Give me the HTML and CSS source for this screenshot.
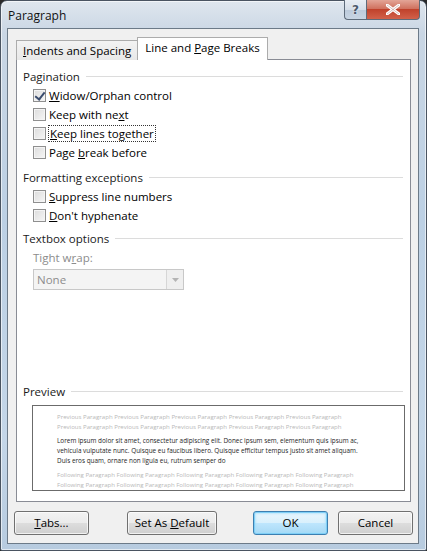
FILE: index.html
```html
<!DOCTYPE html>
<html lang="en">
<head>
  <meta charset="UTF-8">
  <title>Paragraph</title>
  <link rel="stylesheet" href="styles.css">
</head>
<body>
  <div class="window">
    <div class="titlebar">
      <span class="title">Paragraph</span>
      <div class="caption-buttons">
        <div class="cap-btn help">?</div>
        <div class="cap-btn close">
          <svg width="14" height="11" viewBox="0 0 14 11">
            <path d="M1 1 L13 10 M13 1 L1 10" stroke="#fff" stroke-width="3" stroke-linecap="square"/>
            <path d="M1 1 L13 10 M13 1 L1 10" stroke="#7a2a20" stroke-width="0.6" fill="none" opacity="0.5"/>
          </svg>
        </div>
      </div>
    </div>

    <div class="client">
      <div class="tabs">
        <div class="tab"><u>I</u>ndents and Spacing</div>
        <div class="tab active">Line and <u>P</u>age Breaks</div>
      </div>

      <div class="panel">
        <div class="group-title"><span>Pagination</span></div>
        <div class="check-list first-list">
          <label class="check"><span class="box checked"></span><span><u>W</u>idow/Orphan control</span></label>
          <label class="check"><span class="box"></span><span>Keep with ne<u>x</u>t</span></label>
          <label class="check"><span class="box"></span><span class="focus"><u>K</u>eep lines together</span></label>
          <label class="check"><span class="box"></span><span>Page <u>b</u>reak before</span></label>
        </div>

        <div class="group-title"><span>Formatting exceptions</span></div>
        <div class="check-list">
          <label class="check"><span class="box"></span><span><u>S</u>uppress line numbers</span></label>
          <label class="check"><span class="box"></span><span><u>D</u>on't hyphenate</span></label>
        </div>

        <div class="group-title"><span>Textbox options</span></div>
        <div class="field">
          <div class="field-label">Tight w<u>r</u>ap:</div>
          <div class="select">
            <span>None</span>
            <span class="select-arrow">
              <svg width="7" height="4" viewBox="0 0 7 4"><path d="M0 0 H7 L3.5 4 Z" fill="#b4b4b4"/></svg>
            </span>
          </div>
        </div>

        <div class="spacer"></div>

        <div class="group-title"><span>Preview</span></div>
        <div class="preview">
          <div class="pv-line pv-gray">Previous Paragraph Previous Paragraph Previous Paragraph Previous Paragraph Previous Paragraph</div>
          <div class="pv-line pv-gray">Previous Paragraph Previous Paragraph Previous Paragraph Previous Paragraph Previous Paragraph</div>
          <div class="pv-line pv-dark pv-first">Lorem ipsum dolor sit amet, consectetur adipiscing elit. Donec ipsum sem, elementum quis ipsum ac,</div>
          <div class="pv-line pv-dark">vehicula vulputate nunc. Quisque eu faucibus libero. Quisque efficitur tempus justo sit amet aliquam.</div>
          <div class="pv-line pv-dark">Duis eros quam, ornare non ligula eu, rutrum semper do</div>
          <div class="pv-line pv-gray pv-first">Following Paragraph Following Paragraph Following Paragraph Following Paragraph Following Paragraph</div>
          <div class="pv-line pv-gray">Following Paragraph Following Paragraph Following Paragraph Following Paragraph Following Paragraph</div>
        </div>
      </div>

      <div class="buttons">
        <button class="btn"><u>T</u>abs...</button>
        <button class="btn btn-wide">Set As <u>D</u>efault</button>
        <div class="buttons-right">
          <button class="btn btn-default">OK</button>
          <button class="btn">Cancel</button>
        </div>
      </div>
    </div>
  </div>
</body>
</html>
```

FILE: styles.css
```css
* {
  box-sizing: border-box;
}

body {
  margin: 0;
  width: 427px;
  height: 551px;
  overflow: hidden;
  background: #2a2a2a;
  font-family: 'Open Sans', 'Noto Sans', sans-serif;
  font-size: 11.5px;
  color: #000;
}

.window {
  width: 427px;
  height: 551px;
  display: flex;
  flex-direction: column;
  border: 1px solid #4a5461;
  border-radius: 7px 7px 2px 2px;
  background: linear-gradient(180deg, #dfe6ee 0%, #c9d6e4 6%, #bcd0e4 40%, #c4d6e8 80%, #b7cbdf 100%);
  box-shadow: inset 0 0 0 1px rgba(255, 255, 255, 0.6);
}

.titlebar {
  height: 27px;
  display: flex;
  justify-content: space-between;
  align-items: flex-start;
  padding-left: 7px;
}

.title {
  margin-top: 6px;
  font-size: 12px;
  color: #111;
}

.caption-buttons {
  display: flex;
  margin-right: 6px;
  margin-top: -1px;
}

.cap-btn {
  height: 20px;
  display: flex;
  align-items: center;
  justify-content: center;
  border: 1px solid #5e6b7a;
  border-top: none;
}

.help {
  width: 22px;
  border-radius: 0 0 0 4px;
  border-right: none;
  background: linear-gradient(180deg, #e8edf3 0%, #d5dee8 50%, #bccadb 51%, #c8d5e3 100%);
  color: #4c5a6b;
  font-family: 'DejaVu Sans', sans-serif;
  font-weight: bold;
  font-size: 12px;
  text-shadow: 0 0 2px #fff;
}

.close {
  width: 54px;
  border-radius: 0 0 4px 0;
  background: linear-gradient(180deg, #e3a597 0%, #d0725f 45%, #c0422c 50%, #d2614a 100%);
}

.client {
  flex: 1;
  margin: 0 7px 6px 6px;
  background: #f0f0f0;
  border: 1px solid #6c7a88;
  display: flex;
  flex-direction: column;
  padding: 0 7px 0 8px;
}

.tabs {
  display: flex;
  align-items: flex-end;
  height: 31px;
  margin-bottom: -1px;
  position: relative;
  z-index: 1;
}

.tab {
  height: 20px;
  padding: 1px 6px 0 6px;
  border: 1px solid #acacac;
  border-bottom: none;
  background: linear-gradient(180deg, #f3f3f3, #e8e8e8);
  font-size: 11.5px;
  line-height: 18px;
}

.tab.active {
  height: 23px;
  margin-left: -1px;
  padding: 1px 7px 0 7px;
  background: #fff;
  line-height: 18px;
}

.panel {
  height: 443px;
  background: #fff;
  border: 1px solid #898c95;
  display: flex;
  flex-direction: column;
  padding: 7px 7px 10px 6px;
}

.group-title {
  display: flex;
  align-items: center;
  gap: 6px;
  height: 18px;
  color: #1a1a1a;
}

.group-title::after {
  content: "";
  flex: 1;
  border-top: 1px solid #dcdcdc;
  margin-top: 1px;
}

.check-list {
  display: flex;
  flex-direction: column;
  padding: 1px 0 4px 10px;
}

.first-list {
  padding-bottom: 6px;
}

.check {
  display: flex;
  align-items: center;
  gap: 3px;
  height: 19px;
}

.box {
  width: 13px;
  height: 13px;
  border: 1px solid #8f8f8f;
  background: linear-gradient(135deg, #dcdcdc, #f6f6f6);
  box-shadow: inset 0 0 0 1px #f4f4f4;
  position: relative;
}

.box.checked::after {
  content: "";
  position: absolute;
  left: 3px;
  top: 0px;
  width: 4px;
  height: 8px;
  border: solid #3a4c6e;
  border-width: 0 2px 2px 0;
  transform: rotate(38deg);
}

.focus {
  outline: 1px dotted #333;
  outline-offset: 0;
  padding: 0 1px;
}

.field {
  padding: 2px 0 0 10px;
}

.field-label {
  color: #8c8c8c;
  height: 17px;
  line-height: 17px;
}

.select {
  margin-top: 3px;
  width: 151px;
  height: 21px;
  border: 1px solid #c8c8c8;
  background: #f4f4f4;
  display: flex;
  align-items: center;
  justify-content: space-between;
  padding-left: 3px;
  color: #8d8d8d;
}

.select-arrow {
  width: 17px;
  height: 19px;
  border-left: 1px solid #d6d6d6;
  display: flex;
  align-items: center;
  justify-content: center;
  background: #efefef;
}

.spacer {
  flex: 1;
}

.preview {
  margin: 5px 0 0 9px;
  width: 373px;
  height: 86px;
  border: 1px solid #6b6b6b;
  padding: 6px 0 0 24px;
  font-family: 'Open Sans', sans-serif;
  font-size: 6.4px;
  line-height: 10px;
  overflow: hidden;
}

.pv-line {
  white-space: nowrap;
}

.pv-gray {
  color: #b8b8b8;
  font-size: 6.1px;
}

.pv-dark {
  color: #1e1e1e;
}

.pv-first {
  margin-top: 4px;
}

.buttons {
  flex: 1;
  display: flex;
  align-items: center;
  gap: 38px;
  padding: 2px 0 2px 0;
}

.buttons-right {
  margin-left: auto;
  margin-right: -2px;
  display: flex;
  gap: 10px;
}

.btn {
  width: 75px;
  height: 24px;
  border: 1px solid #707070;
  border-radius: 3px;
  background: linear-gradient(180deg, #f2f2f2 0%, #ebebeb 49%, #dddddd 50%, #cfcfcf 100%);
  box-shadow: inset 0 0 0 1px rgba(255, 255, 255, 0.7);
  font-family: 'Open Sans', 'Noto Sans', sans-serif;
  font-size: 11.5px;
  color: #000;
  padding: 0;
}

.btn:first-child {
  margin-left: -2px;
}

.btn-wide {
  width: 90px;
}

.btn-default {
  border-color: #3c7fb1;
  box-shadow: inset 0 0 0 1px #7fcff6, inset 0 0 2px 2px rgba(160, 220, 250, 0.6);
  background: linear-gradient(180deg, #eaf6fd 0%, #d9f0fc 49%, #bee6fd 50%, #a7d9f5 100%);
}
```
